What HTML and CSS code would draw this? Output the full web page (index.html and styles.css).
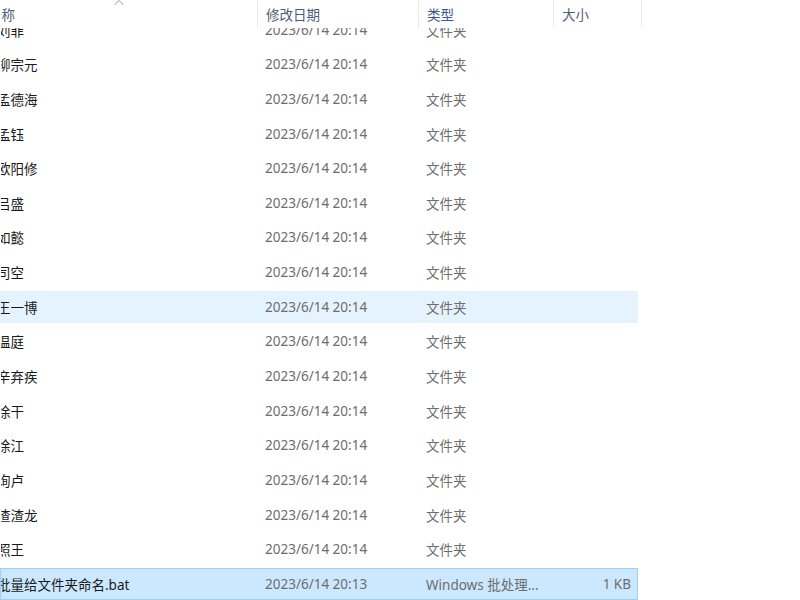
FILE: index.html
```html
<!DOCTYPE html>
<html lang="zh-CN">
<head>
<meta charset="utf-8">
<link rel="stylesheet" href="styles.css">
</head>
<body>
<div class="header">
  <div class="hcell hname"><span class="htext">名称</span><span class="sort">
    <svg width="12" height="7" viewBox="0 0 12 7"><path d="M1.5 6 L6 1.5 L10.5 6" fill="none" stroke="#8f99a4" stroke-width="1"/></svg></span></div>
  <div class="hcell hdate">修改日期</div>
  <div class="hcell htype">类型</div>
  <div class="hcell hsize">大小</div>
</div>
<div class="viewport">
  <div class="list">
    <div class="row"><div class="band"><span class="c name">刘菲</span><span class="c date">2023/6/14 20:14</span><span class="c type">文件夹</span><span class="c size"></span></div></div>
    <div class="row"><div class="band"><span class="c name">柳宗元</span><span class="c date">2023/6/14 20:14</span><span class="c type">文件夹</span><span class="c size"></span></div></div>
    <div class="row"><div class="band"><span class="c name">孟德海</span><span class="c date">2023/6/14 20:14</span><span class="c type">文件夹</span><span class="c size"></span></div></div>
    <div class="row"><div class="band"><span class="c name">孟钰</span><span class="c date">2023/6/14 20:14</span><span class="c type">文件夹</span><span class="c size"></span></div></div>
    <div class="row"><div class="band"><span class="c name">欧阳修</span><span class="c date">2023/6/14 20:14</span><span class="c type">文件夹</span><span class="c size"></span></div></div>
    <div class="row"><div class="band"><span class="c name">吕盛</span><span class="c date">2023/6/14 20:14</span><span class="c type">文件夹</span><span class="c size"></span></div></div>
    <div class="row"><div class="band"><span class="c name">如懿</span><span class="c date">2023/6/14 20:14</span><span class="c type">文件夹</span><span class="c size"></span></div></div>
    <div class="row"><div class="band"><span class="c name">司空</span><span class="c date">2023/6/14 20:14</span><span class="c type">文件夹</span><span class="c size"></span></div></div>
    <div class="row"><div class="band hover"><span class="c name">王一博</span><span class="c date">2023/6/14 20:14</span><span class="c type">文件夹</span><span class="c size"></span></div></div>
    <div class="row"><div class="band"><span class="c name">温庭</span><span class="c date">2023/6/14 20:14</span><span class="c type">文件夹</span><span class="c size"></span></div></div>
    <div class="row"><div class="band"><span class="c name">辛弃疾</span><span class="c date">2023/6/14 20:14</span><span class="c type">文件夹</span><span class="c size"></span></div></div>
    <div class="row"><div class="band"><span class="c name">徐干</span><span class="c date">2023/6/14 20:14</span><span class="c type">文件夹</span><span class="c size"></span></div></div>
    <div class="row"><div class="band"><span class="c name">徐江</span><span class="c date">2023/6/14 20:14</span><span class="c type">文件夹</span><span class="c size"></span></div></div>
    <div class="row"><div class="band"><span class="c name">询卢</span><span class="c date">2023/6/14 20:14</span><span class="c type">文件夹</span><span class="c size"></span></div></div>
    <div class="row"><div class="band"><span class="c name">渣渣龙</span><span class="c date">2023/6/14 20:14</span><span class="c type">文件夹</span><span class="c size"></span></div></div>
    <div class="row"><div class="band"><span class="c name">照王</span><span class="c date">2023/6/14 20:14</span><span class="c type">文件夹</span><span class="c size"></span></div></div>
    <div class="row"><div class="band selected"><span class="c name">批量给文件夹命名.bat</span><span class="c date">2023/6/14 20:13</span><span class="c type">Windows 批处理...</span><span class="c size">1 KB</span></div></div>
  </div>
</div>
</body>
</html>
```

FILE: styles.css
```css
* { box-sizing: border-box; }
html, body {
  margin: 0;
  padding: 0;
  width: 800px;
  height: 600px;
  overflow: hidden;
  background: #ffffff;
  font-family: "Noto Sans", "Noto Sans CJK SC", sans-serif;
  font-size: 13.5px;
}
.header {
  display: flex;
  height: 28px;
  background: #ffffff;
  position: relative;
  z-index: 2;
}
.hcell {
  height: 28px;
  line-height: 28px;
  padding-top: 1px;
  color: #4d6079;
  font-size: 13.5px;
  border-right: 1px solid #e8e8e8;
  white-space: nowrap;
  overflow: hidden;
  padding-left: 8px;
}
.hname {
  width: 258px;
  padding-left: 0;
  position: relative;
}
.htext {
  display: inline-block;
  margin-left: -12px;
}
.sort {
  position: absolute;
  left: 113px;
  top: -1px;
  line-height: 0;
}
.hdate { width: 161px; }
.htype { width: 135px; color: #3a5a8c; }
.hsize { width: 88px; }
.viewport {
  height: 572px;
  overflow: hidden;
}
.list {
  margin-top: -15.8px;
}
.row {
  height: 34.667px;
  padding: 1.33px 0;
}
.band {
  display: flex;
  align-items: center;
  width: 638px;
  height: 32px;
  white-space: nowrap;
  border: 1px solid transparent;
}
.band.hover {
  background: #e5f3ff;
  border-color: #e5f3ff;
}
.band.selected {
  background: #cce8ff;
  border-color: #99d1ff;
}
.c {
  display: block;
  overflow: hidden;
}
.name {
  width: 256px;
  color: #1a1a1a;
  text-indent: -4px;
}
.date {
  width: 161px;
  padding-left: 8px;
  color: #6d6d6d;
}
.type {
  width: 135px;
  padding-left: 8px;
  color: #6d6d6d;
}
.size {
  width: 84px;
  text-align: right;
  padding-right: 6px;
  color: #6d6d6d;
}
```
